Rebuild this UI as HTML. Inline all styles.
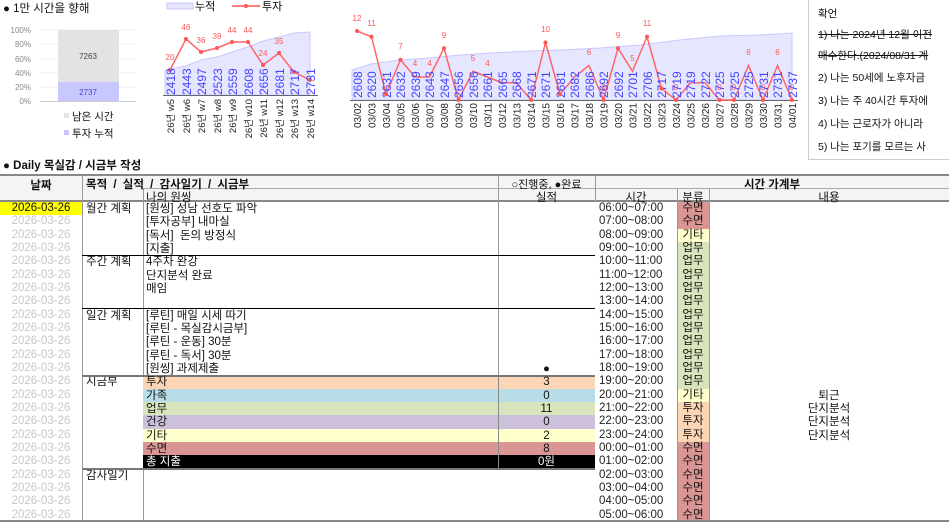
<!DOCTYPE html>
<html><head><meta charset="utf-8"><style>
*{margin:0;padding:0;box-sizing:border-box}
body{width:949px;height:522px;overflow:hidden;background:#fff;font-family:"Liberation Sans","Noto Sans CJK KR",sans-serif;color:#111;position:relative}
.a{position:absolute}
.col{position:absolute;top:203px}
.col div{height:13.333px;line-height:13.333px;font-size:11.5px;white-space:nowrap}
.hl{position:absolute;height:1px;background:#000}
.vl{position:absolute;width:1px;background:#000}
</style></head><body>

<div class="a" style="left:3px;top:0;font-size:11.5px">● 1만 시간을 향해</div>
<svg class="a" style="left:0;top:0" width="160" height="160">
<g font-family="Liberation Sans" font-size="8" fill="#888" text-anchor="end">
<text x="31" y="33">100%</text><text x="31" y="47">80%</text><text x="31" y="62">60%</text><text x="31" y="76">40%</text><text x="31" y="90">20%</text><text x="31" y="104">0%</text></g>
<g stroke="#eee"><line x1="40" y1="30" x2="136" y2="30"/><line x1="40" y1="44" x2="136" y2="44"/><line x1="40" y1="59" x2="136" y2="59"/><line x1="40" y1="73" x2="136" y2="73"/><line x1="40" y1="87" x2="136" y2="87"/></g>
<rect x="58" y="30" width="61" height="52" fill="#e3e3e3"/>
<rect x="58" y="82" width="61" height="19" fill="#c8c8ff"/>
<line x1="40" y1="101.5" x2="136" y2="101.5" stroke="#ccc"/>
<text x="88" y="59" font-size="8" fill="#444" text-anchor="middle" font-family="Liberation Sans">7263</text>
<text x="88" y="95" font-size="8" fill="#44c" text-anchor="middle" font-family="Liberation Sans">2737</text>
<rect x="64" y="113" width="5" height="5" fill="#e3e3e3"/>
<rect x="64" y="130" width="5" height="5" fill="#c8c8ff"/>
</svg>
<div class="a" style="left:72px;top:109px;font-size:10.5px">남은 시간</div>
<div class="a" style="left:72px;top:126px;font-size:10.5px">투자 누적</div>

<svg class="a" style="left:160px;top:0" width="180" height="160" font-family="Liberation Sans">
<rect x="7" y="3" width="26" height="6" fill="#e6e6ff" stroke="#c8c8ff"/>
<text x="35" y="10" font-size="11" font-family="Noto Sans CJK KR">누적</text>
<line x1="72" y1="6" x2="100" y2="6" stroke="#f55" stroke-width="1.5"/><circle cx="86" cy="6" r="2" fill="#f55"/>
<text x="102" y="10" font-size="11" font-family="Noto Sans CJK KR">투자</text>
<polygon points="5,95 5,70 26,66 41,60 57,57 72,52 88,47 103,41 119,37 134,33 150,32 150,95" fill="#e6e6ff" stroke="#c8c8ff"/>
<line x1="3" y1="95.5" x2="158" y2="95.5" stroke="#666"/>
<polyline points="10,70 26,39 41,52 57,48 72,42 88,42 103,65 119,53 134,72 150,80" fill="none" stroke="#f66" stroke-width="1.5"/>
<g fill="#f55"><circle cx="10" cy="70" r="2"/><circle cx="26" cy="39" r="2"/><circle cx="41" cy="52" r="2"/><circle cx="57" cy="48" r="2"/><circle cx="72" cy="42" r="2"/><circle cx="88" cy="42" r="2"/><circle cx="103" cy="65" r="2"/><circle cx="119" cy="53" r="2"/><circle cx="134" cy="72" r="2"/><circle cx="150" cy="80" r="2"/></g>
<g fill="#f55" font-size="8" text-anchor="middle"><text x="10" y="60">20</text><text x="26" y="30">46</text><text x="41" y="43">36</text><text x="57" y="39">39</text><text x="72" y="33">44</text><text x="88" y="33">44</text><text x="103" y="56">24</text><text x="119" y="44">35</text></g>
<g fill="#44f" font-size="12">
<text transform="translate(15,95) rotate(-90)">2418</text><text transform="translate(31,95) rotate(-90)">2443</text><text transform="translate(46,95) rotate(-90)">2497</text><text transform="translate(62,95) rotate(-90)">2523</text><text transform="translate(77,95) rotate(-90)">2559</text><text transform="translate(93,95) rotate(-90)">2608</text><text transform="translate(108,95) rotate(-90)">2656</text><text transform="translate(124,95) rotate(-90)">2681</text><text transform="translate(139,95) rotate(-90)">2717</text><text transform="translate(155,95) rotate(-90)">2731</text></g>
<g fill="#222" font-size="9.5" text-anchor="end" font-family="Liberation Sans,Noto Sans CJK KR">
<text transform="translate(14,99) rotate(-90)">26년 w5</text><text transform="translate(30,99) rotate(-90)">26년 w6</text><text transform="translate(45,99) rotate(-90)">26년 w7</text><text transform="translate(61,99) rotate(-90)">26년 w8</text><text transform="translate(76,99) rotate(-90)">26년 w9</text><text transform="translate(92,99) rotate(-90)">26년 w10</text><text transform="translate(107,99) rotate(-90)">26년 w11</text><text transform="translate(123,99) rotate(-90)">26년 w12</text><text transform="translate(138,99) rotate(-90)">26년 w13</text><text transform="translate(154,99) rotate(-90)">26년 w14</text></g>
</svg>

<svg class="a" style="left:0;top:0" width="808" height="160" font-family="Liberation Sans">
<polygon points="352,100 352,70 371,64 400,60 430,58 460,55 490,53 530,51 560,50 600,48 640,45 680,40 720,36 760,35 792,33 792,100" fill="#e6e6ff" stroke="#c8c8ff"/>
<line x1="350" y1="100.5" x2="798" y2="100.5" stroke="#666"/>
<polyline fill="none" stroke="#f66" stroke-width="1.5" points="357,31 371.5,36.75 386,94.25 400.5,59.75 415,77 429.5,77 444,48.25 458.5,100 473,71.25 487.5,77 502,82.75 516.5,82.75 531,100 545.5,42.5 560,94.25 574.5,77 589,65.5 603.5,100 618,48.25 632.5,71.25 647,36.75 661.5,88.5 676,100 690.5,82.75 705,82.75 719.5,100 734,100 748.5,65.5 763,100 777.5,65.5 792,100"/>
<g fill="#f55" font-size="8" text-anchor="middle">
<text x="357" y="21">12</text><text x="371.5" y="26">11</text><text x="400.5" y="49">7</text><text x="415" y="66">4</text><text x="429.5" y="66">4</text><text x="444" y="38">9</text><text x="473" y="61">5</text><text x="487.5" y="66">4</text><text x="545.5" y="32">10</text><text x="589" y="55">6</text><text x="603.5" y="90">0</text><text x="618" y="38">9</text><text x="632.5" y="61">5</text><text x="647" y="26">11</text><text x="676" y="90">0</text><text x="719.5" y="90">0</text><text x="734" y="90">0</text><text x="748.5" y="55">6</text><text x="763" y="90">0</text><text x="777.5" y="55">6</text><text x="792" y="90">0</text></g>
<g fill="#44f" font-size="12">
<text transform="translate(362,98) rotate(-90)">2608</text><text transform="translate(376,98) rotate(-90)">2620</text><text transform="translate(391,98) rotate(-90)">2631</text><text transform="translate(405,98) rotate(-90)">2632</text><text transform="translate(420,98) rotate(-90)">2639</text><text transform="translate(434,98) rotate(-90)">2643</text><text transform="translate(449,98) rotate(-90)">2647</text><text transform="translate(463,98) rotate(-90)">2656</text><text transform="translate(478,98) rotate(-90)">2656</text><text transform="translate(492,98) rotate(-90)">2661</text><text transform="translate(507,98) rotate(-90)">2665</text><text transform="translate(521,98) rotate(-90)">2668</text><text transform="translate(536,98) rotate(-90)">2671</text><text transform="translate(550,98) rotate(-90)">2671</text><text transform="translate(565,98) rotate(-90)">2681</text><text transform="translate(579,98) rotate(-90)">2682</text><text transform="translate(594,98) rotate(-90)">2686</text><text transform="translate(608,98) rotate(-90)">2692</text><text transform="translate(623,98) rotate(-90)">2692</text><text transform="translate(637,98) rotate(-90)">2701</text><text transform="translate(652,98) rotate(-90)">2706</text><text transform="translate(666,98) rotate(-90)">2717</text><text transform="translate(681,98) rotate(-90)">2719</text><text transform="translate(695,98) rotate(-90)">2719</text><text transform="translate(710,98) rotate(-90)">2722</text><text transform="translate(724,98) rotate(-90)">2725</text><text transform="translate(739,98) rotate(-90)">2725</text><text transform="translate(753,98) rotate(-90)">2725</text><text transform="translate(768,98) rotate(-90)">2731</text><text transform="translate(782,98) rotate(-90)">2731</text><text transform="translate(797,98) rotate(-90)">2737</text></g>
<g fill="#222" font-size="10" text-anchor="end">
<text transform="translate(361,103) rotate(-90)">03/02</text><text transform="translate(375.5,103) rotate(-90)">03/03</text><text transform="translate(390,103) rotate(-90)">03/04</text><text transform="translate(404.5,103) rotate(-90)">03/05</text><text transform="translate(419,103) rotate(-90)">03/06</text><text transform="translate(433.5,103) rotate(-90)">03/07</text><text transform="translate(448,103) rotate(-90)">03/08</text><text transform="translate(462.5,103) rotate(-90)">03/09</text><text transform="translate(477,103) rotate(-90)">03/10</text><text transform="translate(491.5,103) rotate(-90)">03/11</text><text transform="translate(506,103) rotate(-90)">03/12</text><text transform="translate(520.5,103) rotate(-90)">03/13</text><text transform="translate(535,103) rotate(-90)">03/14</text><text transform="translate(549.5,103) rotate(-90)">03/15</text><text transform="translate(564,103) rotate(-90)">03/16</text><text transform="translate(578.5,103) rotate(-90)">03/17</text><text transform="translate(593,103) rotate(-90)">03/18</text><text transform="translate(607.5,103) rotate(-90)">03/19</text><text transform="translate(622,103) rotate(-90)">03/20</text><text transform="translate(636.5,103) rotate(-90)">03/21</text><text transform="translate(651,103) rotate(-90)">03/22</text><text transform="translate(665.5,103) rotate(-90)">03/23</text><text transform="translate(680,103) rotate(-90)">03/24</text><text transform="translate(694.5,103) rotate(-90)">03/25</text><text transform="translate(709,103) rotate(-90)">03/26</text><text transform="translate(723.5,103) rotate(-90)">03/27</text><text transform="translate(738,103) rotate(-90)">03/28</text><text transform="translate(752.5,103) rotate(-90)">03/29</text><text transform="translate(767,103) rotate(-90)">03/30</text><text transform="translate(781.5,103) rotate(-90)">03/31</text><text transform="translate(796,103) rotate(-90)">04/01</text></g>
<g fill="#f55"><circle cx="357" cy="31" r="2"/><circle cx="371.5" cy="36.75" r="2"/><circle cx="386" cy="94.25" r="2"/><circle cx="400.5" cy="59.75" r="2"/><circle cx="444" cy="48.25" r="2"/><circle cx="458.5" cy="100" r="2"/><circle cx="531" cy="100" r="2"/><circle cx="545.5" cy="42.5" r="2"/><circle cx="560" cy="94.25" r="2"/><circle cx="603.5" cy="100" r="2"/><circle cx="618" cy="48.25" r="2"/><circle cx="647" cy="36.75" r="2"/><circle cx="661.5" cy="88.5" r="2"/><circle cx="676" cy="100" r="2"/><circle cx="719.5" cy="100" r="2"/><circle cx="734" cy="100" r="2"/><circle cx="763" cy="100" r="2"/><circle cx="792" cy="100" r="2"/></g>
</svg>

<div class="a" style="left:808px;top:-2px;width:150px;height:162px;border:1px solid #ccc;font-size:10.5px;padding-left:9px;white-space:nowrap;overflow:hidden">
<div style="position:absolute;top:7px;left:9px">확언</div>
<div style="position:absolute;top:28px;left:9px;text-decoration:line-through">1) 나는 2024년 12월 이전</div>
<div style="position:absolute;top:49px;left:9px;text-decoration:line-through">매수한다.(2024/08/31 계</div>
<div style="position:absolute;top:71px;left:9px">2) 나는 50세에 노후자금</div>
<div style="position:absolute;top:94px;left:9px">3) 나는 주 40시간 투자에</div>
<div style="position:absolute;top:117px;left:9px">4) 나는 근로자가 아니라</div>
<div style="position:absolute;top:140px;left:9px">5) 나는 포기를 모르는 사</div>
</div>

<div class="a" style="left:3px;top:157px;font-size:11.5px;font-weight:bold">● Daily 목실감 / 시금부 작성</div>

<div class="a" style="left:0;top:174px;width:949px;height:28px;background:#f4f4f4;border-top:2px solid #888;border-bottom:2px solid #888"></div>
<div class="a" style="left:143px;top:188px;width:806px;height:1px;background:#aaa"></div>
<div class="a" style="left:0;top:177px;width:82px;text-align:center;font-size:11.5px;font-weight:bold">날짜</div>
<div class="a" style="left:86px;top:176px;font-size:11.5px;font-weight:bold;word-spacing:3px">목적 / 실적 / 감사일기 / 시금부</div>
<div class="a" style="left:498px;top:176px;width:97px;text-align:center;font-size:11px">○진행중, ●완료</div>
<div class="a" style="left:595px;top:176px;width:354px;text-align:center;font-size:11.5px;font-weight:bold">시간 가계부</div>
<div class="a" style="left:146px;top:189px;font-size:11.5px">나의 원씽</div>
<div class="a" style="left:498px;top:189px;width:97px;text-align:center;font-size:11.5px">실적</div>
<div class="a" style="left:595px;top:189px;width:82px;text-align:center;font-size:11.5px">시간</div>
<div class="a" style="left:677px;top:189px;width:32px;text-align:center;font-size:11.5px">분류</div>
<div class="a" style="left:709px;top:189px;width:240px;text-align:center;font-size:11.5px">내용</div>
<div class="vl" style="left:82px;top:176px;height:346px;background:#999"></div>
<div class="vl" style="left:143px;top:188px;height:334px;background:#999"></div>
<div class="vl" style="left:498px;top:176px;height:290px;background:#999"></div>
<div class="vl" style="left:595px;top:176px;height:26px;background:#999"></div>
<div class="vl" style="left:677px;top:188px;height:14px;background:#999"></div>
<div class="vl" style="left:709px;top:188px;height:334px;background:#999"></div>

<div class="a" style="left:143px;top:375.3px;width:452px;height:13.33px;background:#fcd5b4"></div>
<div class="a" style="left:143px;top:388.7px;width:452px;height:13.33px;background:#b7dde8"></div>
<div class="a" style="left:143px;top:402px;width:452px;height:13.33px;background:#d8e4bc"></div>
<div class="a" style="left:143px;top:415.3px;width:452px;height:13.33px;background:#ccc0da"></div>
<div class="a" style="left:143px;top:428.7px;width:452px;height:13.33px;background:#ffffcc"></div>
<div class="a" style="left:143px;top:442px;width:452px;height:13.33px;background:#da9694"></div>
<div class="a" style="left:143px;top:455.3px;width:452px;height:13.33px;background:#000"></div>
<div class="vl" style="left:498px;top:375px;height:93px;background:#888"></div>

<div class="col" style="left:0;top:202px;width:82px;text-align:center;color:#c8c8c8">
<div style="background:#ffff00;color:#111">2026-03-26</div><div>2026-03-26</div><div>2026-03-26</div><div>2026-03-26</div><div>2026-03-26</div><div>2026-03-26</div><div>2026-03-26</div><div>2026-03-26</div><div>2026-03-26</div><div>2026-03-26</div><div>2026-03-26</div><div>2026-03-26</div><div>2026-03-26</div><div>2026-03-26</div><div>2026-03-26</div><div>2026-03-26</div><div>2026-03-26</div><div>2026-03-26</div><div>2026-03-26</div><div>2026-03-26</div><div>2026-03-26</div><div>2026-03-26</div><div>2026-03-26</div><div>2026-03-26</div></div>

<div class="a" style="left:86px;top:203px;font-size:11.5px;line-height:13px">월간 계획</div>
<div class="a" style="left:86px;top:256px;font-size:11.5px;line-height:13px">주간 계획</div>
<div class="a" style="left:86px;top:310px;font-size:11.5px;line-height:13px">일간 계획</div>
<div class="a" style="left:86px;top:376px;font-size:11.5px;line-height:13px">시금부</div>
<div class="a" style="left:86px;top:470px;font-size:11.5px;line-height:13px">감사일기</div>
<div class="hl" style="left:82px;top:255px;width:513px"></div>
<div class="hl" style="left:82px;top:308px;width:513px"></div>
<div class="hl" style="left:82px;top:375px;width:513px;height:2px;background:#777"></div>
<div class="hl" style="left:82px;top:468px;width:513px;height:2px;background:#777"></div>

<div class="col" style="left:146px;width:350px">
<div>[원씽] 성남 선호도 파악</div><div>[투자공부] 내마실</div><div>[독서]&nbsp; 돈의 방정식</div><div>[지출]</div>
<div>4주차 완강</div><div>단지분석 완료</div><div>매임</div><div></div>
<div>[루틴] 매일 시세 따기</div><div>[루틴 - 목실감시금부]</div><div>[루틴 - 운동] 30분</div><div>[루틴 - 독서] 30분</div><div>[원씽] 과제제출</div>
<div>투자</div><div>가족</div><div>업무</div><div>건강</div><div>기타</div><div>수면</div><div style="color:#fff">총 지출</div></div>
<div class="col" style="left:498px;width:97px;text-align:center">
<div></div><div></div><div></div><div></div><div></div><div></div><div></div><div></div><div></div><div></div><div></div><div></div><div>●</div>
<div>3</div><div>0</div><div>11</div><div>0</div><div>2</div><div>8</div><div style="color:#fff">0원</div></div>

<div class="col" style="left:599px;top:202px;width:78px;color:#222">
<div>06:00~07:00</div><div>07:00~08:00</div><div>08:00~09:00</div><div>09:00~10:00</div><div>10:00~11:00</div><div>11:00~12:00</div><div>12:00~13:00</div><div>13:00~14:00</div><div>14:00~15:00</div><div>15:00~16:00</div><div>16:00~17:00</div><div>17:00~18:00</div><div>18:00~19:00</div><div>19:00~20:00</div><div>20:00~21:00</div><div>21:00~22:00</div><div>22:00~23:00</div><div>23:00~24:00</div><div>00:00~01:00</div><div>01:00~02:00</div><div>02:00~03:00</div><div>03:00~04:00</div><div>04:00~05:00</div><div>05:00~06:00</div></div>
<div class="col" style="left:677px;top:202px;width:32px;text-align:center">
<div style="background:#da9694">수면</div><div style="background:#da9694">수면</div><div style="background:#ffffcc">기타</div>
<div style="background:#d8e4bc">업무</div><div style="background:#d8e4bc">업무</div><div style="background:#d8e4bc">업무</div><div style="background:#d8e4bc">업무</div><div style="background:#d8e4bc">업무</div><div style="background:#d8e4bc">업무</div><div style="background:#d8e4bc">업무</div><div style="background:#d8e4bc">업무</div><div style="background:#d8e4bc">업무</div><div style="background:#d8e4bc">업무</div><div style="background:#d8e4bc">업무</div>
<div style="background:#ffffcc">기타</div><div style="background:#fcd5b4">투자</div><div style="background:#fcd5b4">투자</div><div style="background:#fcd5b4">투자</div>
<div style="background:#da9694">수면</div><div style="background:#da9694">수면</div><div style="background:#da9694">수면</div><div style="background:#da9694">수면</div><div style="background:#da9694">수면</div><div style="background:#da9694">수면</div></div>
<div class="vl" style="left:677px;top:202px;height:320px;background:#999"></div>
<div class="col" style="left:709px;width:240px;text-align:center">
<div></div><div></div><div></div><div></div><div></div><div></div><div></div><div></div><div></div><div></div><div></div><div></div><div></div><div></div>
<div>퇴근</div><div>단지분석</div><div>단지분석</div><div>단지분석</div></div>
<div class="hl" style="left:0;top:520px;width:949px;height:2px;background:#888"></div>
</body></html>
